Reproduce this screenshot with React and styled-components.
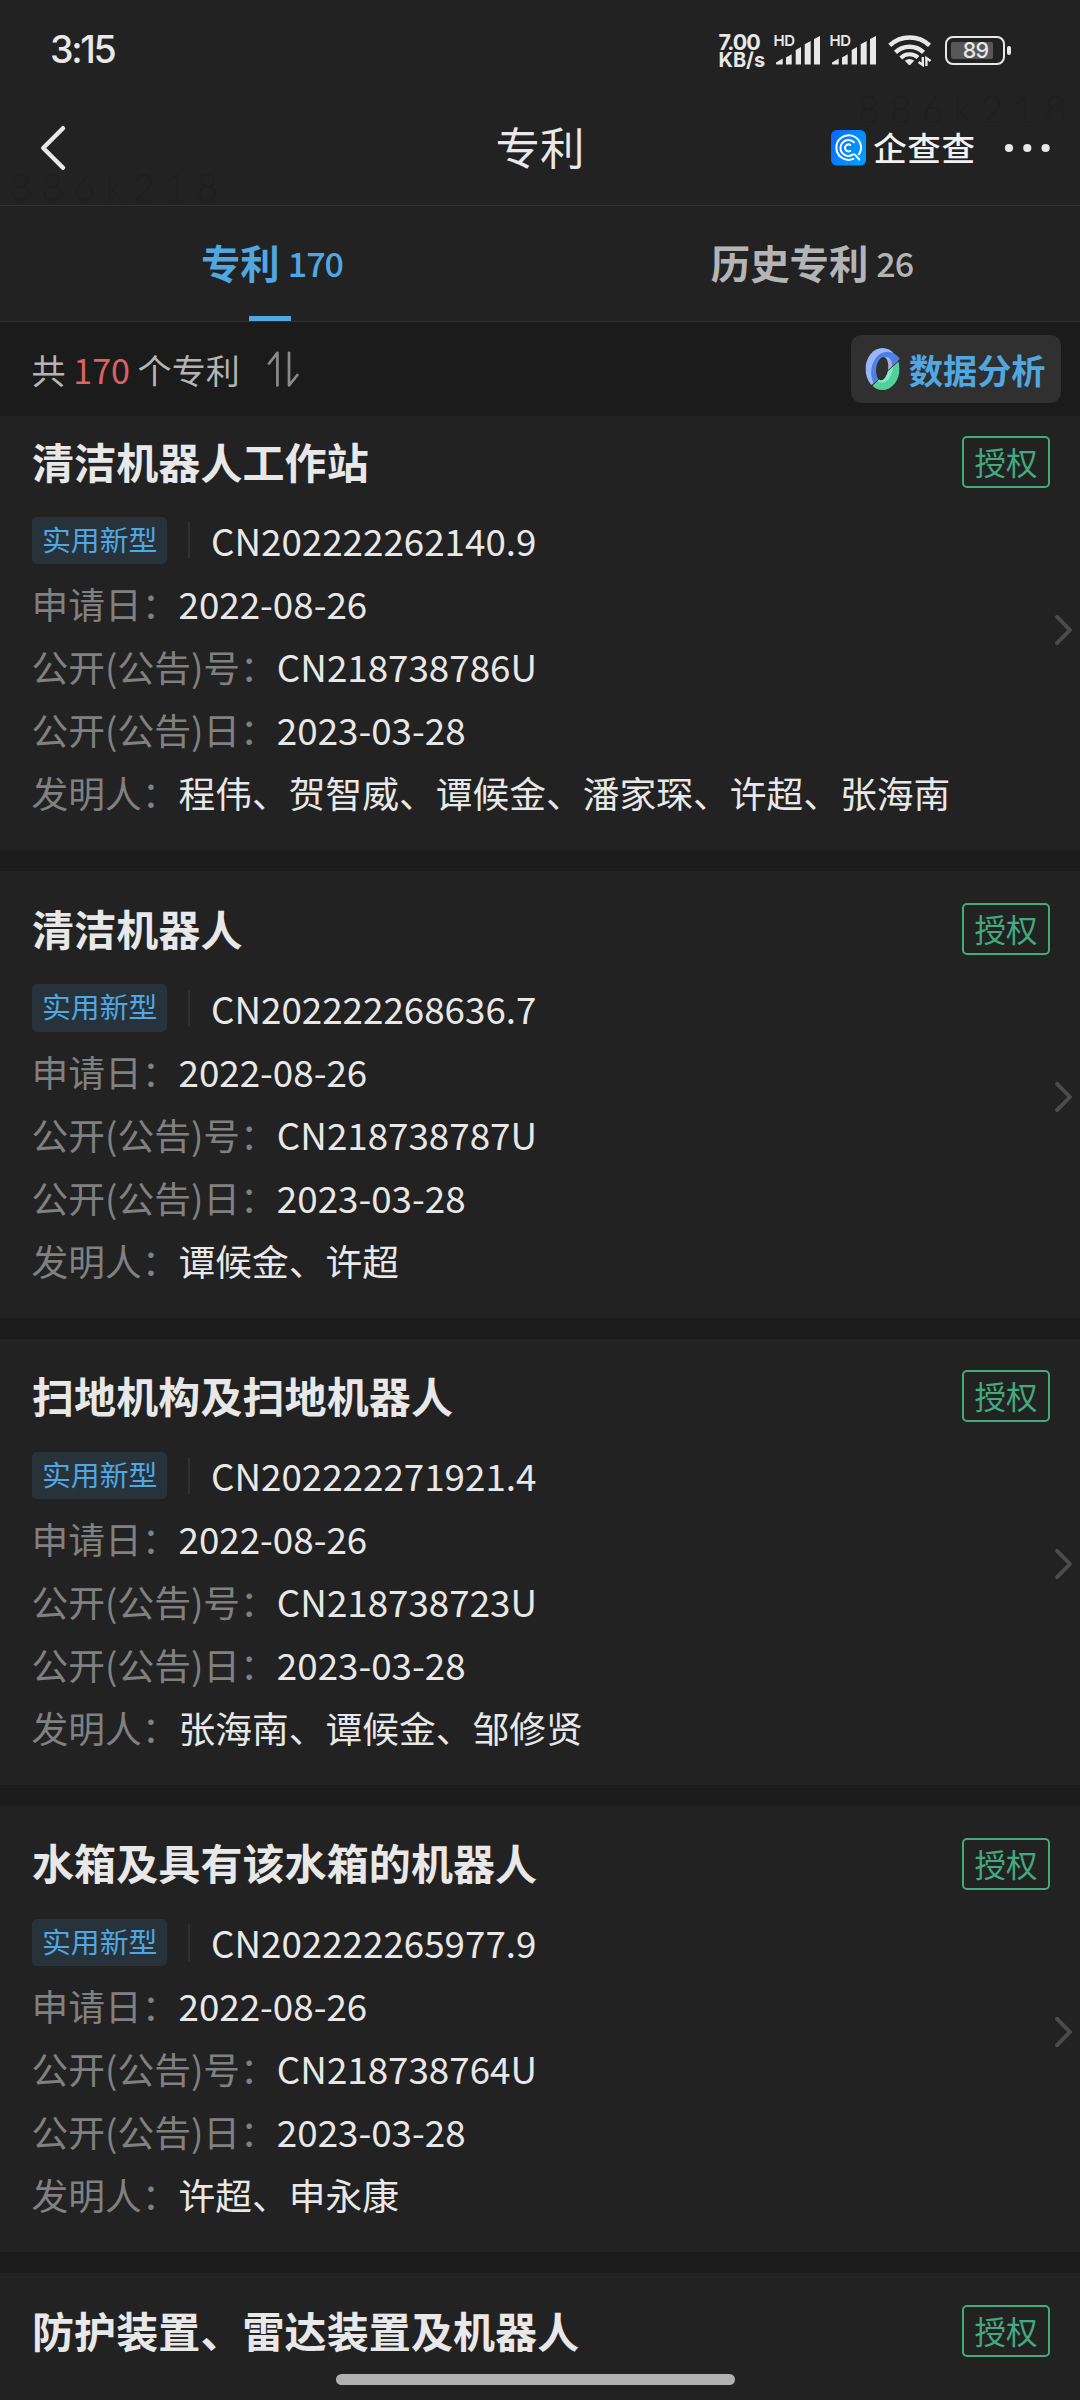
import React from "react";
import styled, { createGlobalStyle } from "styled-components";

const color = {
  page: "#1b1b1b",
  surface: "#222222",
  line: "#303030",
  text: "#e8e8e8",
  soft: "#b4b4b4",
  muted: "#808080",
  blue: "#50a7e1",
  red: "#da6361",
  green: "#43a97e",
};

const GlobalStyle = createGlobalStyle`
  * { box-sizing: border-box; }
  html, body { margin: 0; background: ${color.page}; }
  body {
    font-family: "Noto Sans CJK SC", "Noto Sans", sans-serif;
    color: ${color.text};
    overflow: hidden;
  }
`;

const Screen = styled.div`
  position: relative;
  display: flex;
  flex-direction: column;
  width: 1080px;
  height: 2400px;
  overflow: hidden;
  background: ${color.page};
`;

/* ---------- status bar ---------- */

const StatusBar = styled.div`
  display: flex;
  align-items: center;
  justify-content: space-between;
  height: 100px;
  padding: 0 69.5px 0 50px;
  background: ${color.surface};
  font-family: Inter, sans-serif;
`;

const Clock = styled.div`
  font-size: 37.5px;
  font-weight: 500;
  line-height: 44px;
  letter-spacing: -2.3px;
`;

const StatusIcons = styled.div`
  display: flex;
  align-items: center;
`;

const NetSpeed = styled.div`
  display: flex;
  flex-direction: column;
  width: 55px;
  padding-top: 1px;
`;

const NetLine = styled.span`
  font-size: ${(p) => p.$size}px;
  font-weight: 700;
  line-height: 18px;
  letter-spacing: ${(p) => p.$track}px;
`;

const Signal = styled.div`
  display: flex;
  flex-direction: column;
  width: 46px;
  height: 30px;
  margin-right: 10px;
`;

const SignalLabel = styled.span`
  height: 0;
  font-size: 15px;
  font-weight: 600;
  line-height: 11px;
  letter-spacing: -0.5px;
`;

const WifiSlot = styled.div`
  display: flex;
  width: 44px;
  margin: 0 13px 0 2px;
`;

const BatteryBody = styled.div`
  display: flex;
  width: 60px;
  height: 29px;
  padding: 4px 4.5px;
  border: 2.4px solid ${color.text};
  border-radius: 8px;
`;

const BatteryLevel = styled.div`
  display: flex;
  align-items: center;
  justify-content: flex-end;
  width: 42px;
  height: 17px;
  padding-right: 4.5px;
  border-radius: 2px;
  background: #575757;
  font-size: 21.5px;
  font-weight: 500;
  letter-spacing: -0.6px;
  line-height: 17px;
`;

const BatteryTip = styled.div`
  width: 4px;
  height: 9px;
  margin-left: 2px;
  border-radius: 2px;
  background: ${color.text};
`;

/* ---------- title bar ---------- */

const TitleBar = styled.header`
  display: grid;
  grid-template-columns: 1fr auto 1fr;
  align-items: center;
  height: 106px;
  padding: 0 30px 9px 39px;
  border-bottom: 1px solid ${color.line};
  background: ${color.surface};
`;

const PageTitle = styled.h1`
  margin: 0 9px 5px 0;
  font-size: 44.6px;
  font-weight: 400;
  line-height: 60px;
`;

const TitleActions = styled.div`
  display: flex;
  align-items: center;
  justify-content: flex-end;
`;

const BrandName = styled.span`
  margin: -3px 28.5px 0 7px;
  font-size: 33.5px;
  font-weight: 500;
  line-height: 40px;
  letter-spacing: 0.6px;
  color: #f2f2f2;
`;

const Watermark = styled.span`
  position: absolute;
  left: ${(p) => p.$x}px;
  top: ${(p) => p.$y}px;
  font-family: Lato, sans-serif;
  font-size: 38px;
  font-weight: 300;
  line-height: 30px;
  letter-spacing: 9.7px;
  color: #1f1f1f;
  pointer-events: none;
`;

/* ---------- tabs ---------- */

const Tabs = styled.nav`
  display: flex;
  height: 116px;
  border-bottom: 1px solid ${color.line};
  background: ${color.surface};
`;

const Tab = styled.div`
  flex: 1;
  display: flex;
  flex-direction: column;
  align-items: center;
  justify-content: space-between;
  color: ${(p) => (p.$active ? color.blue : color.soft)};
`;

const TabLabel = styled.div`
  display: flex;
  align-items: center;
  gap: 8px;
  height: 111px;
  margin-left: 4px;
  font-size: 39.4px;
  font-weight: 700;
  line-height: 56px;
`;

const TabCount = styled.span`
  font-size: 34.1px;
  font-weight: 500;
  letter-spacing: -1px;
`;

const TabMarker = styled.div`
  flex: none;
  width: 42px;
  height: 5px;
  margin-top: -1px;
  background: ${color.blue};
`;

/* ---------- summary bar ---------- */

const Summary = styled.div`
  display: flex;
  align-items: center;
  height: 94px;
  padding: 0 19px 0 31.5px;
`;

const SummaryText = styled.div`
  margin-right: 26px;
  font-size: 34.1px;
  line-height: 50px;
  color: ${color.soft};
`;

const Highlight = styled.span`
  color: ${color.red};
`;

const AnalysisButton = styled.div`
  display: flex;
  align-items: center;
  gap: 9px;
  width: 210px;
  height: 68px;
  margin-left: auto;
  padding: 0 0 1px 14px;
  border-radius: 11px;
  background: #303030;
  color: ${color.blue};
  font-size: 34.1px;
  font-weight: 700;
  line-height: 50px;
`;

/* ---------- patent cards ---------- */

const List = styled.main`
  flex: 1;
  display: flex;
  flex-direction: column;
  gap: 21px;
  overflow: hidden;
`;

const Card = styled.article`
  flex: none;
  display: flex;
  height: 446.25px;
  padding: 26.55px 0 0 31.5px;
  background: ${color.surface};
  &:first-child {
    margin-top: -12px;
  }
`;

const CardBody = styled.div`
  flex: 1;
`;

const CardHead = styled.div`
  display: flex;
  justify-content: space-between;
  align-items: flex-start;
  height: 78.75px;
`;

const CardTitle = styled.h2`
  margin: 0 0 0 0.5px;
  font-size: 42px;
  font-weight: 700;
  line-height: 60px;
  letter-spacing: 0.1px;
`;

const StatusTag = styled.span`
  width: 88px;
  height: 52px;
  margin-top: 5.45px;
  border: 2px solid ${color.green};
  border-radius: 5px;
  color: ${color.green};
  font-size: 31.5px;
  line-height: 46px;
  text-align: center;
`;

const Row = styled.div`
  display: flex;
  align-items: center;
  height: 63px;
  font-size: 36.75px;
  line-height: 63px;
  white-space: nowrap;
`;

const KindTag = styled.span`
  width: 135.5px;
  height: 47.25px;
  padding-left: 10.5px;
  border-radius: 5px;
  background: #27323b;
  color: ${color.blue};
  font-size: 28.875px;
  line-height: 43px;
`;

const Divider = styled.span`
  width: 2px;
  height: 37px;
  margin: 0 21px;
  background: ${color.line};
`;

const Label = styled.span`
  color: ${color.muted};
`;

const ArrowSlot = styled.div`
  display: flex;
  align-items: center;
  width: 30px;
  padding: 0 0 21px 4px;
`;

const HomeIndicator = styled.div`
  position: absolute;
  left: 336px;
  bottom: 15px;
  width: 399px;
  height: 11px;
  border-radius: 6px;
  background: #b1b1b1;
`;

/* ---------- drawings ---------- */

const SignalIcon = () => (
  <svg width="46" height="30" viewBox="0 0 46 30" fill={color.text}>
    <path d="M2 27.5 8.7 23.5V29.6H3.2Q2 29.6 2 28.4ZM12 22.4 17.7 19.2V29.6H12ZM21.7 15 27 12V29.6H21.7ZM30.7 9.2 36.7 6V29.6H30.7ZM40 4 46 1V29.6H40Z" />
  </svg>
);

const WifiIcon = () => (
  <svg width="44" height="34" viewBox="0 0 44 34" fill="none" stroke={color.text} strokeWidth="4.4">
    <path d="M1.8 12.4A29 29 0 0 1 41.5 12.4" />
    <path d="M7.5 19.4A20 20 0 0 1 35.5 19.4" />
    <path d="M12.8 25A12.5 12.5 0 0 1 30 24.6" strokeWidth="4" />
    <path d="M16.8 27.8Q21.5 24 26.2 27.8L22.6 31.6Q21.5 32.6 20.4 31.6Z" fill={color.text} stroke="none" />
    <path d="M34.8 24V32L30.6 29M38.4 33V25L42.6 28" strokeWidth="2.4" />
  </svg>
);

const BackIcon = () => (
  <svg width="28" height="48" viewBox="0 0 28 48" fill="none" stroke={color.text} strokeWidth="4.4" strokeLinecap="round" strokeLinejoin="round">
    <path d="M24 4.2 4.2 24 24 43.8" />
  </svg>
);

const BrandIcon = () => (
  <svg width="35" height="35.6" viewBox="0 0 105 107" fill="none">
    <defs>
      <linearGradient id="brand" x1="0" y1="0" x2="1" y2="0.5">
        <stop offset="0" stopColor="#0a66ff" />
        <stop offset="1" stopColor="#009cff" />
      </linearGradient>
    </defs>
    <rect width="105" height="107" rx="17" fill="url(#brand)" />
    <g stroke="#fff" strokeLinecap="round">
      <path d="M67 87A37 37 0 1 1 84 73" strokeWidth="6" />
      <path d="M72 74 85 89" strokeWidth="6" />
      <path d="M69 37A24 24 0 1 0 67 73" strokeWidth="6" />
      <path d="M58 45A10.5 10.5 0 1 0 58 63" strokeWidth="6" />
    </g>
  </svg>
);

const MoreIcon = () => (
  <svg width="46" height="10" viewBox="0 0 46 10" fill={color.text}>
    <circle cx="5" cy="5" r="4.1" />
    <circle cx="23.3" cy="5" r="4.1" />
    <circle cx="41.6" cy="5" r="4.1" />
  </svg>
);

const SortIcon = () => (
  <svg width="34" height="36" viewBox="0 0 34 36" fill="none" stroke="#8a8a8a" strokeWidth="2.7" strokeLinecap="round" strokeLinejoin="round">
    <path d="M3 12.5 11.4 1.8V34.5" />
    <path d="M23 1.8V34.5L31.4 24" />
  </svg>
);

const RingIcon = () => (
  <svg width="35" height="42" viewBox="0 0 104 126">
    <defs>
      <clipPath id="ringTop">
        <path d="M0 0H104V33L20 110 0 126Z" />
      </clipPath>
      <clipPath id="ringBottom">
        <path d="M104 37 22 113V126H104Z" />
      </clipPath>
      <mask id="ringHole">
        <rect width="104" height="126" fill="#fff" />
        <ellipse cx="51" cy="62" rx="18" ry="35" fill="#000" transform="rotate(8 51 62)" />
      </mask>
    </defs>
    <g mask="url(#ringHole)">
      <g clipPath="url(#ringTop)">
        <ellipse cx="52" cy="63" rx="51" ry="63" fill="#9cb5f7" />
        <ellipse cx="67" cy="73" rx="49" ry="62" fill="#4e80e6" />
        <path d="M58 28C74 24 82 38 80 60L66 70Z" fill="#a9b2d2" />
      </g>
      <g clipPath="url(#ringBottom)">
        <ellipse cx="52" cy="63" rx="51" ry="63" fill="#53d19b" />
        <ellipse cx="54" cy="60" rx="29" ry="44" fill="#86e9c1" transform="rotate(8 54 60)" />
      </g>
    </g>
  </svg>
);

const ArrowIcon = () => (
  <svg width="20" height="34" viewBox="0 0 20 34" fill="none" stroke="#4c4c4c" strokeWidth="3.9" strokeLinecap="round" strokeLinejoin="round">
    <path d="M3 3.8 16 17 3 30.2" />
  </svg>
);

/* ---------- content ---------- */

const patents = [
  {
    title: "清洁机器人工作站",
    number: "CN202222262140.9",
    publication: "CN218738786U",
    inventors: "程伟、贺智威、谭候金、潘家琛、许超、张海南",
  },
  {
    title: "清洁机器人",
    number: "CN202222268636.7",
    publication: "CN218738787U",
    inventors: "谭候金、许超",
  },
  {
    title: "扫地机构及扫地机器人",
    number: "CN202222271921.4",
    publication: "CN218738723U",
    inventors: "张海南、谭候金、邹修贤",
  },
  {
    title: "水箱及具有该水箱的机器人",
    number: "CN202222265977.9",
    publication: "CN218738764U",
    inventors: "许超、申永康",
  },
  { title: "防护装置、雷达装置及机器人" },
];

const Field = ({ label, children }) => (
  <Row>
    <Label>{label}：</Label>
    <span>{children}</span>
  </Row>
);

const PatentCard = ({ patent }) => (
  <Card>
    <CardBody>
      <CardHead>
        <CardTitle>{patent.title}</CardTitle>
        <StatusTag>授权</StatusTag>
      </CardHead>
      {patent.number && (
        <>
          <Row>
            <KindTag>实用新型</KindTag>
            <Divider />
            <span>{patent.number}</span>
          </Row>
          <Field label="申请日">2022-08-26</Field>
          <Field label="公开(公告)号">{patent.publication}</Field>
          <Field label="公开(公告)日">2023-03-28</Field>
          <Field label="发明人">{patent.inventors}</Field>
        </>
      )}
    </CardBody>
    <ArrowSlot>{patent.number && <ArrowIcon />}</ArrowSlot>
  </Card>
);

const MobileSignal = () => (
  <Signal>
    <SignalLabel>HD</SignalLabel>
    <SignalIcon />
  </Signal>
);

export default function App() {
  return (
    <Screen>
      <GlobalStyle />
      <StatusBar>
        <Clock>3:15</Clock>
        <StatusIcons>
          <NetSpeed>
            <NetLine $size={21.5} $track={-1}>7.00</NetLine>
            <NetLine $size={20} $track={0}>KB/s</NetLine>
          </NetSpeed>
          <MobileSignal />
          <MobileSignal />
          <WifiSlot>
            <WifiIcon />
          </WifiSlot>
          <BatteryBody>
            <BatteryLevel>89</BatteryLevel>
          </BatteryBody>
          <BatteryTip />
        </StatusIcons>
      </StatusBar>
      <TitleBar>
        <BackIcon />
        <PageTitle>专利</PageTitle>
        <TitleActions>
          <BrandIcon />
          <BrandName>企查查</BrandName>
          <MoreIcon />
        </TitleActions>
      </TitleBar>
      <Watermark $x={10} $y={171}>886k218</Watermark>
      <Watermark $x={858} $y={93}>886k218</Watermark>
      <Tabs>
        <Tab $active>
          <TabLabel>
            专利<TabCount>170</TabCount>
          </TabLabel>
          <TabMarker />
        </Tab>
        <Tab>
          <TabLabel>
            历史专利<TabCount>26</TabCount>
          </TabLabel>
        </Tab>
      </Tabs>
      <Summary>
        <SummaryText>
          共 <Highlight>170</Highlight> 个专利
        </SummaryText>
        <SortIcon />
        <AnalysisButton>
          <RingIcon />
          数据分析
        </AnalysisButton>
      </Summary>
      <List>
        {patents.map((patent) => (
          <PatentCard key={patent.title} patent={patent} />
        ))}
      </List>
      <HomeIndicator />
    </Screen>
  );
}
